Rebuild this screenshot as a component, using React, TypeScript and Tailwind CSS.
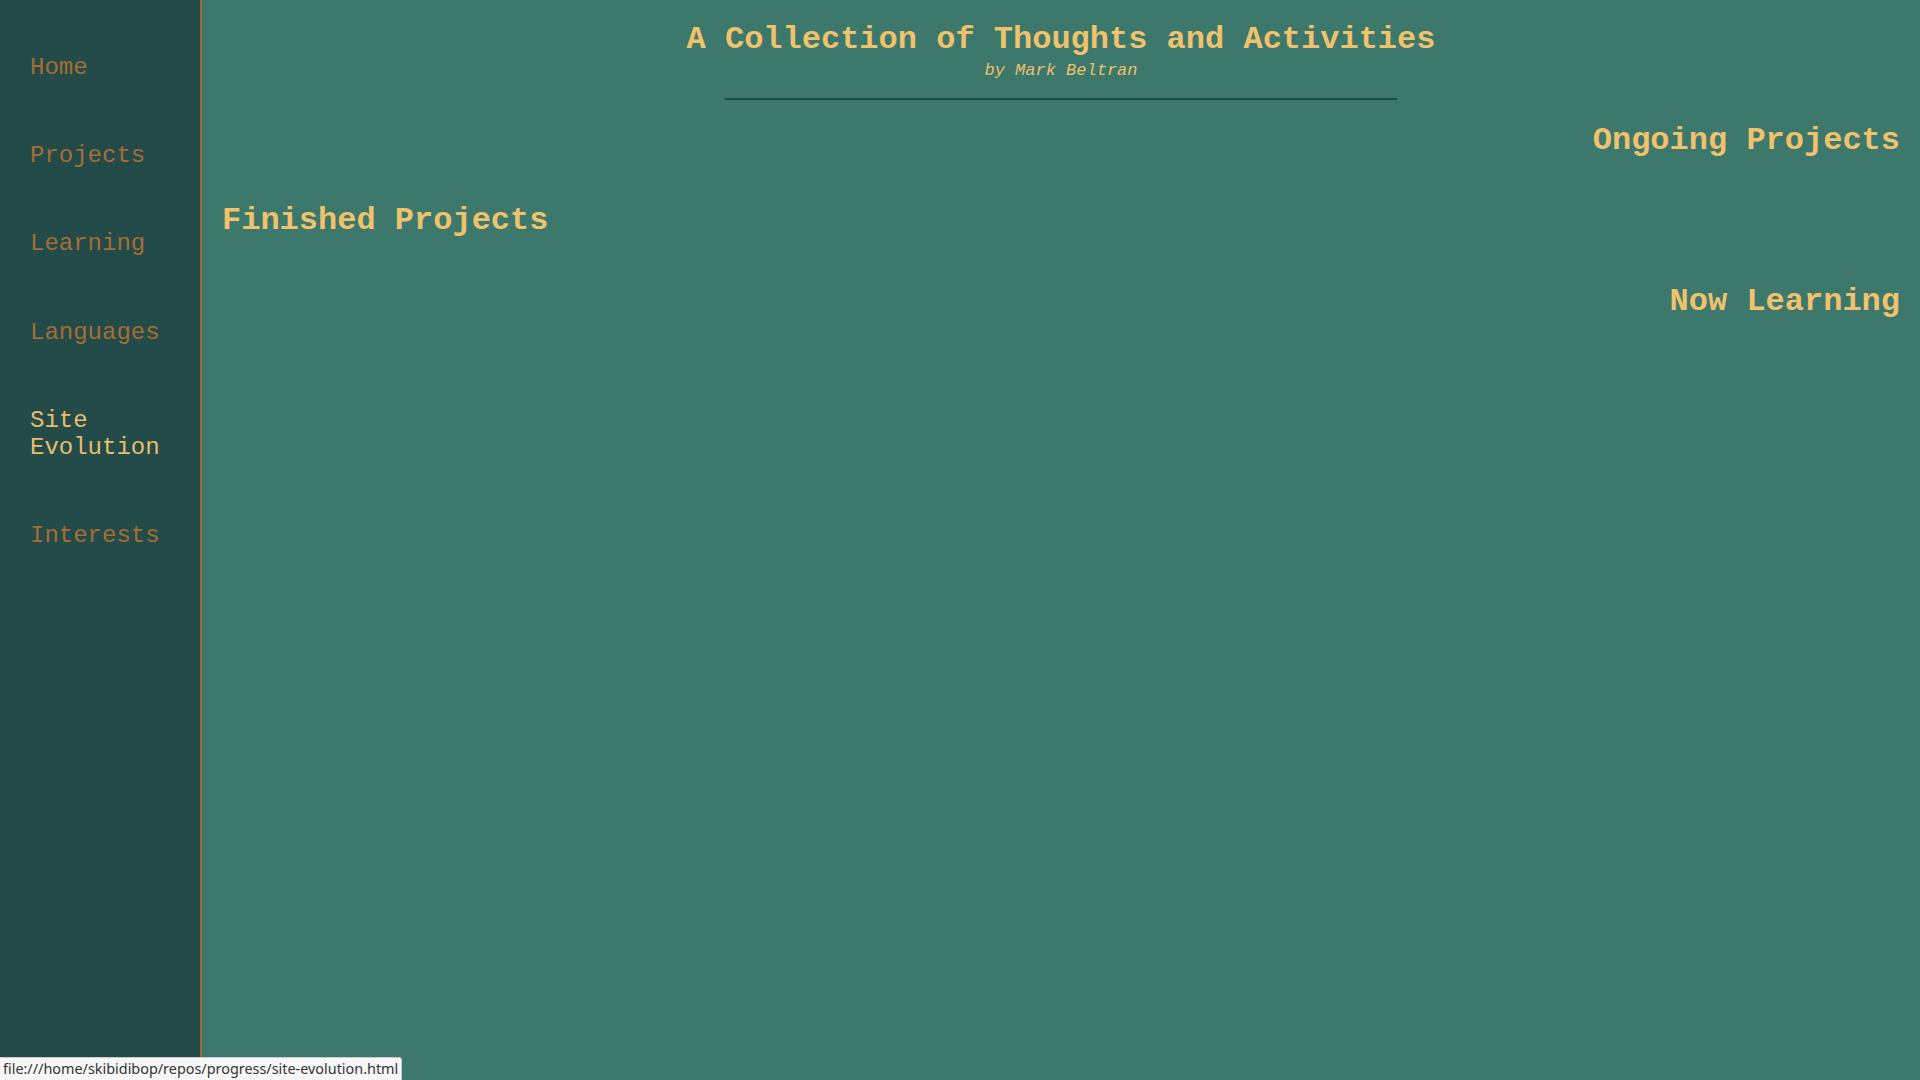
const navItems = [
  { label: "Home", active: false },
  { label: "Projects", active: false },
  { label: "Learning", active: false },
  { label: "Languages", active: false },
  { label: "Site Evolution", active: true },
  { label: "Interests", active: false },
]

export default function App() {
  return (
    <div className="relative flex h-screen w-full overflow-hidden font-['Liberation_Mono','Courier_New',monospace]">
      {/* Sidebar */}
      <nav className="w-[202px] shrink-0 border-r-2 border-[#a5692f] bg-[#224b4a] pt-[54px] pl-[30px] pr-4">
        <ul className="flex flex-col gap-[61px]">
          {navItems.map((item) => (
            <li key={item.label}>
              <a
                href="#"
                className={
                  item.active
                    ? "block text-[24px] leading-[27.2px] text-[#eabd6b]"
                    : "block text-[24px] leading-[27.2px] text-[#a86d31]"
                }
              >
                {item.label}
              </a>
            </li>
          ))}
        </ul>
      </nav>

      {/* Main Content */}
      <main className="flex-1 bg-[#3d786d] px-5 text-[#f0c26b]">
        <header className="pt-[22px] text-center">
          <h1 className="text-[32px] font-bold leading-[36.25px]">A Collection of Thoughts and Activities</h1>
          <p className="mt-[3px] text-[17px] italic leading-[19.3px]">by Mark Beltran</p>
          <hr className="mx-auto mt-[17px] w-[672px] border-0 border-t-2 border-[#224b4a]" />
        </header>

        <section className="mt-[23.5px]">
          <h2 className="text-right text-[32px] font-bold leading-[36.25px]">Ongoing Projects</h2>
        </section>
        <section className="mt-[44px]">
          <h2 className="text-left text-[32px] font-bold leading-[36.25px]">Finished Projects</h2>
        </section>
        <section className="mt-[44px]">
          <h2 className="text-right text-[32px] font-bold leading-[36.25px]">Now Learning</h2>
        </section>
      </main>

      {/* Browser status bubble */}
      <div className="absolute bottom-0 left-0 rounded-tr-[3px] border border-b-0 border-l-0 border-[#c9c9c9] bg-[#f7f7f7] px-[3px] pt-[1px] pb-[1px] font-['Noto_Sans',sans-serif] text-[14.4px] leading-[20px] text-[#333333]">
        file:///home/skibidibop/repos/progress/site-evolution.html
      </div>
    </div>
  )
}
